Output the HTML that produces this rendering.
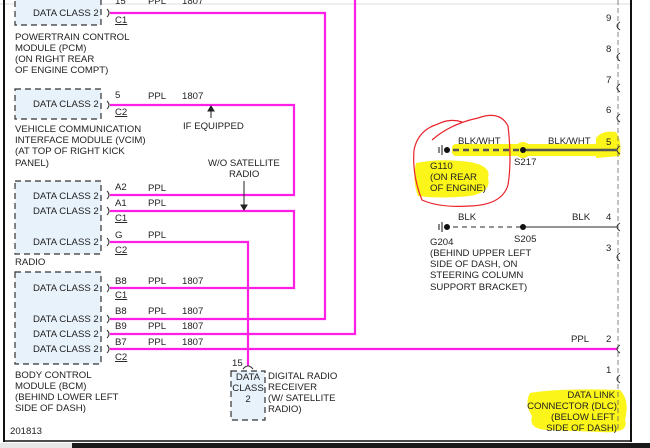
<!DOCTYPE html>
<html><head><meta charset="utf-8"><style>
html,body{margin:0;padding:0;background:#fff;width:650px;height:448px;overflow:hidden}
svg{display:block}
text{font-family:"Liberation Sans",Arial,sans-serif;font-size:9.6px;fill:#222}
.u{text-decoration:underline}
.box{fill:#e8f2fb;stroke:#333;stroke-width:1.2;stroke-dasharray:6,4}
.m{stroke:#ff1ee6;stroke-width:2.2;fill:none}
</style></head><body>
<svg width="650" height="448" viewBox="0 0 650 448" xmlns="http://www.w3.org/2000/svg">
<rect x="0" y="0" width="650" height="448" fill="#fff"/>
<line x1="0" y1="4" x2="631" y2="4" stroke="#ddd" stroke-width="1"/>
<!-- frame -->
<line x1="4" y1="0" x2="4" y2="442" stroke="#111" stroke-width="2"/>
<line x1="631" y1="0" x2="631" y2="442" stroke="#111" stroke-width="2"/>
<line x1="4" y1="441" x2="631" y2="441" stroke="#111" stroke-width="1.5"/>
<rect x="0" y="443" width="72" height="5" fill="#e6e6e6"/>
<rect x="72" y="443" width="578" height="5" fill="#1a1a1a"/>

<!-- yellow highlights -->
<g fill="#fbf51a" stroke="none">
<rect x="452" y="144" width="168" height="12" rx="4"/>
<circle cx="523" cy="150" r="8"/>
<path d="M596 138 Q602 130 616 132 Q622 140 620 156 L596 158 Z"/>
<path d="M416 163 Q440 158 470 162 Q492 166 488 178 Q492 192 470 196 Q440 199 418 196 Q412 180 416 163Z"/>
<path d="M530 393 Q560 388 620 390 Q630 400 625 420 Q630 434 600 432 L550 430 Q528 430 532 416 Q524 404 530 393Z"/>
</g>
<!-- red circle -->
<path d="M432 140 Q450 124 478 118 Q500 110 508 126 Q512 160 508 185 Q502 205 470 206 Q440 208 422 200 Q412 175 414 150 Q418 130 438 124 Q450 118 462 122" fill="none" stroke="#e8232b" stroke-width="1.2"/>

<!-- magenta wires -->
<path class="m" d="M110 13 H325 V319 H110"/>
<path class="m" d="M110 105 H294 V195 H110"/>
<path class="m" d="M110 211 H294 V288 H110"/>
<path class="m" d="M110 242 H248 V366"/>
<path class="m" d="M355 0 V334 H110"/>
<path class="m" d="M110 349 H617"/>

<!-- boxes -->
<rect class="box" x="15" y="-5" width="86" height="30"/>
<rect class="box" x="15" y="89" width="86" height="30"/>
<rect class="box" x="15" y="181" width="86" height="73"/>
<rect class="box" x="15" y="272" width="86" height="92"/>
<rect class="box" x="231" y="371" width="34" height="49"/>

<!-- connector brackets left -->
<g fill="none" stroke="#333" stroke-width="1">
<path d="M107 9 Q111 13 107 17"/><path d="M107 101 Q111 105 107 109"/>
<path d="M107 191 Q111 195 107 199"/><path d="M107 207 Q111 211 107 215"/>
<path d="M107 238 Q111 242 107 246"/><path d="M107 284 Q111 288 107 292"/>
<path d="M107 315 Q111 319 107 323"/><path d="M107 330 Q111 334 107 338"/>
<path d="M107 345 Q111 349 107 353"/>
<path d="M243 369 Q248 363 253 369"/>
</g>

<g>
<text x="33" y="16">DATA CLASS 2</text><text x="115" y="4">15</text><text x="148" y="4">PPL</text><text x="182" y="4">1807</text>
<text x="115" y="23" class="u">C1</text>
<text x="15" y="40">POWERTRAIN CONTROL</text><text x="15" y="51">MODULE (PCM)</text><text x="15" y="62">(ON RIGHT REAR</text><text x="15" y="73">OF ENGINE COMPT)</text>

<text x="33" y="107">DATA CLASS 2</text><text x="115" y="98">5</text><text x="148" y="99">PPL</text><text x="182" y="99">1807</text>
<text x="115" y="115" class="u">C2</text>
<text x="15" y="132">VEHICLE COMMUNICATION</text><text x="15" y="143">INTERFACE MODULE (VCIM)</text><text x="15" y="154">(AT TOP OF RIGHT KICK</text><text x="15" y="166">PANEL)</text>
<text x="183" y="129">IF EQUIPPED</text>
<text x="208" y="166">W/O SATELLITE</text><text x="229" y="177">RADIO</text>

<text x="115" y="190">A2</text><text x="148" y="191">PPL</text>
<text x="33" y="199">DATA CLASS 2</text>
<text x="115" y="206">A1</text><text x="148" y="206">PPL</text>
<text x="33" y="214">DATA CLASS 2</text>
<text x="115" y="221" class="u">C1</text>
<text x="115" y="238">G</text><text x="148" y="238">PPL</text>
<text x="33" y="245">DATA CLASS 2</text>
<text x="115" y="253" class="u">C2</text>
<text x="15" y="265">RADIO</text>

<text x="115" y="284">B8</text><text x="148" y="284">PPL</text><text x="182" y="284">1807</text>
<text x="33" y="291">DATA CLASS 2</text>
<text x="115" y="298" class="u">C1</text>
<text x="115" y="314">B8</text><text x="148" y="314">PPL</text><text x="182" y="314">1807</text>
<text x="33" y="322">DATA CLASS 2</text>
<text x="115" y="329">B9</text><text x="148" y="329">PPL</text><text x="182" y="329">1807</text>
<text x="33" y="337">DATA CLASS 2</text>
<text x="115" y="345">B7</text><text x="148" y="345">PPL</text><text x="182" y="345">1807</text>
<text x="33" y="352">DATA CLASS 2</text>
<text x="115" y="360" class="u">C2</text>
<text x="15" y="378">BODY CONTROL</text><text x="15" y="389">MODULE (BCM)</text><text x="15" y="400">(BEHIND LOWER LEFT</text><text x="15" y="411">SIDE OF DASH)</text>
<text x="10" y="434">201813</text>

<text x="232" y="366">15</text>
<text x="248" y="380" text-anchor="middle">DATA</text><text x="248" y="391" text-anchor="middle">CLASS</text><text x="248" y="402" text-anchor="middle">2</text>
<text x="268" y="379">DIGITAL RADIO</text><text x="268" y="390">RECEIVER</text><text x="268" y="401">(W/ SATELLITE</text><text x="268" y="412">RADIO)</text>
</g>

<!-- arrows -->
<g stroke="#222" stroke-width="1" fill="#222">
<line x1="211" y1="118" x2="211" y2="110"/><path d="M208 111 L211 106 L214 111Z"/>
<line x1="244" y1="181" x2="244" y2="206"/><path d="M241 205 L244 210 L247 205Z"/>
</g>

<!-- right connector -->
<line x1="618" y1="0" x2="618" y2="432" stroke="#666" stroke-width="0.8" stroke-dasharray="5,3"/>
<g fill="none" stroke="#333" stroke-width="1">
<path d="M620 22 Q614 26 620 30"/><path d="M620 53 Q614 57 620 61"/><path d="M620 84 Q614 88 620 92"/>
<path d="M620 114 Q614 118 620 122"/><path d="M620 146 Q614 150 620 154"/><path d="M620 223 Q614 227 620 231"/>
<path d="M620 253 Q614 257 620 261"/><path d="M620 345 Q614 349 620 353"/><path d="M620 375 Q614 379 620 383"/>
</g>
<g>
<text x="606" y="21">9</text><text x="606" y="52">8</text><text x="606" y="83">7</text><text x="606" y="113">6</text>
<text x="606" y="145">5</text><text x="606" y="220">4</text><text x="606" y="251">3</text><text x="606" y="342">2</text><text x="606" y="373">1</text>
</g>

<!-- BLK/WHT -->
<line x1="453" y1="150" x2="523" y2="150" stroke="#555" stroke-width="2.5" stroke-dasharray="6,4"/>
<line x1="523" y1="150" x2="617" y2="150" stroke="#555" stroke-width="2.5"/>
<circle cx="447" cy="150" r="3" fill="#111"/><circle cx="523" cy="150" r="3" fill="#111"/>
<line x1="442" y1="145" x2="442" y2="155" stroke="#111"/><line x1="439" y1="147" x2="439" y2="153" stroke="#111"/>
<text x="458" y="144">BLK/WHT</text><text x="548" y="144">BLK/WHT</text>
<text x="514" y="165">S217</text>
<text x="430" y="169">G110</text><text x="430" y="180">(ON REAR</text><text x="430" y="191">OF ENGINE)</text>

<!-- BLK -->
<line x1="453" y1="227" x2="523" y2="227" stroke="#555" stroke-width="1.2" stroke-dasharray="5,4"/>
<line x1="523" y1="227" x2="617" y2="227" stroke="#555" stroke-width="1.2"/>
<circle cx="447" cy="227" r="3" fill="#111"/><circle cx="523" cy="227" r="3" fill="#111"/>
<line x1="442" y1="222" x2="442" y2="232" stroke="#111"/><line x1="439" y1="224" x2="439" y2="230" stroke="#111"/>
<text x="458" y="220">BLK</text><text x="572" y="220">BLK</text>
<text x="514" y="242">S205</text>
<text x="430" y="245">G204</text><text x="430" y="256">(BEHIND UPPER LEFT</text><text x="430" y="267">SIDE OF DASH, ON</text><text x="430" y="278">STEERING COLUMN</text><text x="430" y="290">SUPPORT BRACKET)</text>

<text x="571" y="342">PPL</text>
<g text-anchor="end">
<text x="615" y="398">DATA LINK</text><text x="617" y="409">CONNECTOR (DLC)</text><text x="615" y="420">(BELOW LEFT</text><text x="617" y="431">SIDE OF DASH)</text>
</g>
</svg>
</body></html>
